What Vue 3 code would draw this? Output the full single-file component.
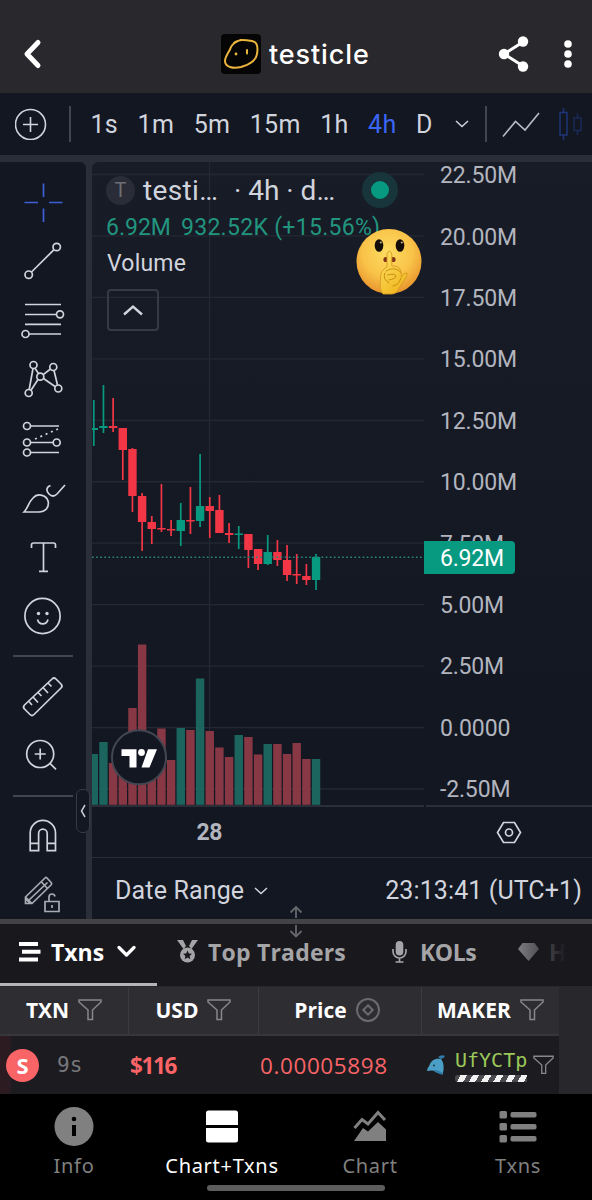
<script setup>
import { ref } from "vue"

const intervals = ["1s", "1m", "5m", "15m", "1h", "4h", "D"]
const activeInterval = ref("4h")

const priceLabels = ["22.50M", "20.00M", "17.50M", "15.00M", "12.50M", "10.00M", "7.50M", "5.00M", "2.50M", "0.0000", "-2.50M"]
const labelWidth = { 5: 64, 6: 77 }

// up, high, low, body top, body bottom, volume top
const rows = [
  [1, 400, 446, 428, 430, 754],
  [1, 385, 433, 426, 428, 742],
  [0, 398, 432, 426, 428, 763],
  [0, 428, 480, 428, 450, 760],
  [0, 448, 512, 449, 496, 708],
  [0, 493, 551, 496, 522, 644.5],
  [0, 516, 544, 522, 529, 755],
  [0, 484, 532, 528, 529, 728.5],
  [0, 520, 536, 529, 530, 760],
  [1, 503, 546, 520, 531, 728],
  [0, 487, 534, 520, 521, 730],
  [1, 454, 527, 506, 521, 678.5],
  [0, 497, 538, 506, 511, 731],
  [0, 495, 533, 510, 533, 747.5],
  [0, 523, 543, 533, 535, 757],
  [1, 526, 549, 533.5, 534.5, 735],
  [0, 534, 568, 534, 550, 737],
  [0, 549, 570, 549, 564, 754.5],
  [1, 535, 565, 552, 564, 744],
  [0, 540, 566, 552, 560, 744],
  [0, 545, 581, 560, 575, 754],
  [0, 554, 584, 574, 575, 743],
  [0, 564, 585, 576, 580, 759],
  [1, 554, 590, 557, 580, 759]
]
const candles = rows.map(([up, high, low, top, bottom, vol], i) => ({
  up, high, low, top, bottom, vol,
  x: 93.8 + i * 9.663
}))

const navItems = ["Info", "Chart+Txns", "Chart", "Txns"]
const activeNav = ref("Chart+Txns")
</script>

<template>
  <div class="app">
    <header class="header">
      <svg class="back" width="20" height="32" viewBox="0 0 20 32">
        <path d="M16 4.500 5 16 16 27.500" fill="none" stroke="#fff" stroke-width="5" stroke-linecap="round" stroke-linejoin="round" />
      </svg>
      <svg class="logo" width="40" height="40" viewBox="0 0 40 40">
        <rect width="40" height="40" rx="4" fill="#050505" />
        <path d="M13 9C17 5 24 6 31 7C37 8 37 14 36 20C35 27 27 31 20 33C12 35 4 33 4 27C4 22 9 17 10 13C11 10 16 7 20 6" fill="none" stroke="#eab53c" stroke-width="2" stroke-linecap="round" />
        <circle cx="15" cy="20" r="1.400" fill="#eab53c" />
        <path d="M26 16V19.500" stroke="#eab53c" stroke-width="2" stroke-linecap="round" />
      </svg>
      <h1 class="title">testicle</h1>
      <svg class="share" width="32" height="36" viewBox="0 0 32 36">
        <path d="M25 6 6 18 25 30" fill="none" stroke="#fff" stroke-width="3" />
        <circle cx="25" cy="5.500" r="5.200" fill="#fff" />
        <circle cx="6" cy="18" r="5.200" fill="#fff" />
        <circle cx="25" cy="30.500" r="5.200" fill="#fff" />
      </svg>
      <svg class="more" width="8" height="30" viewBox="0 0 8 30">
        <circle cx="4" cy="5" r="3.800" fill="#fff" />
        <circle cx="4" cy="15" r="3.800" fill="#fff" />
        <circle cx="4" cy="25" r="3.800" fill="#fff" />
      </svg>
    </header>

    <div class="toolbar">
      <svg width="32" height="32" viewBox="0 0 32 32" fill="none" stroke="#d1d4dc" stroke-width="1.600">
        <circle cx="15.500" cy="16.500" r="15" />
        <path d="M15.500 9V24M8 16.500H23" />
      </svg>
      <i class="divider first"></i>
      <button
        v-for="item in intervals"
        :key="item"
        class="interval"
        :class="{ active: item === activeInterval }"
        @click="activeInterval = item"
      >{{ item }}</button>
      <svg class="caret" width="14" height="8" viewBox="0 0 14 8">
        <path d="M1 1 7 6.500 13 1" fill="none" stroke="#d1d4dc" stroke-width="1.500" />
      </svg>
      <i class="divider"></i>
      <svg class="line-type" width="38" height="28" viewBox="0 0 38 28">
        <path d="M1 26.500 13.500 11.500 23 20 37 3" fill="none" stroke="#b9bcc5" stroke-width="1.600" />
      </svg>
      <svg class="candle-type" width="24" height="34" viewBox="0 0 24 34" fill="none" stroke="#1e3677" stroke-width="1.500">
        <path d="M1 5.500H8V28H1ZM4.500 1V5.500M4.500 28V33" />
        <path d="M15 11H22V23.500H15ZM18.500 6.500V11M18.500 23.500V28" stroke="#1a2b59" />
      </svg>
    </div>

    <div class="main">
      <aside class="tools">
        <svg class="tool" viewBox="0 0 86 59">
          <path class="blue" d="M43.500 10.500V24M43.500 35.500V49M24.500 29.500H38M49 29.500H62.500" />
        </svg>
        <svg class="tool" viewBox="0 0 86 59">
          <circle cx="56.700" cy="15" r="3.700" /><circle cx="28.700" cy="42.700" r="3.700" />
          <path d="M31.500 40 54 17.700" />
        </svg>
        <svg class="tool" viewBox="0 0 86 59">
          <circle cx="60" cy="23.300" r="3.500" /><circle cx="25.500" cy="43" r="3.500" />
          <path d="M25 13.500H61M25 23.500H56.500M25 33.300H61M29 43H61" />
        </svg>
        <svg class="tool" viewBox="0 0 86 59">
          <circle cx="33.500" cy="15" r="3.500" /><circle cx="53.300" cy="17" r="3.500" /><circle cx="40.300" cy="26.700" r="3.500" />
          <circle cx="28.700" cy="43" r="3.500" /><circle cx="58.300" cy="38.500" r="3.500" />
          <path d="M33 18.500 29.200 39.500M35 18.200 38.500 23.500M38 29.500 31 40.200M43.200 24.600 50.500 19M43.500 28.500 55 36.500M54 20.500 57.500 35" />
        </svg>
        <svg class="tool" viewBox="0 0 86 59">
          <circle cx="27" cy="17" r="3.500" /><circle cx="27" cy="33.500" r="3.500" /><circle cx="56.700" cy="33.500" r="3.500" /><circle cx="27" cy="43.500" r="3.500" />
          <path d="M30.500 17H59M30.500 33.500H53M30.500 43.500H59" />
          <path d="M35 30 58 20" stroke-dasharray="2 3.800" />
        </svg>
        <svg class="tool" viewBox="0 0 86 59">
          <path d="M24 44C28 40 28 35 33 30C38 24.500 47 27 48.300 34C49 40 45 44 39 44ZM50.500 17.500C46 19 46 23 49 26C52 29 54.500 28.500 57 26L65 17" />
        </svg>
        <svg class="tool" viewBox="0 0 86 59">
          <path d="M31.500 21V18Q31.500 16 33.500 16H53.500Q55.500 16 55.500 18V21M43.500 16V44M39 44.300H48" />
        </svg>
        <svg class="tool" viewBox="0 0 86 59">
          <circle cx="42.500" cy="30" r="17.600" />
          <path d="M37.500 33.500C39 39.300 46.500 39.300 48 33.500" />
          <circle class="solid" cx="38.500" cy="27.500" r="1.700" /><circle class="solid" cx="47" cy="27.500" r="1.700" />
        </svg>
        <i class="rule"></i>
        <svg class="tool" viewBox="0 0 86 59">
          <path d="M52 12Q54 10 56 12L61 17Q63 19 61 21L34 47.500Q32 49.500 30 47.500L24.500 42Q22.500 40 24.500 38ZM28.500 34 32 38M33 30 38 35.500M38 25.500 41.500 29M43 20.500 48 26M48 16 51.500 19.500" />
        </svg>
        <svg class="tool" viewBox="0 0 86 59">
          <circle cx="40.200" cy="28" r="13.500" />
          <path d="M40.200 22.500V33.500M34.700 28H45.700M49.700 37.200 56 43.300" />
        </svg>
        <i class="rule"></i>
        <svg class="tool" viewBox="0 0 86 59">
          <path d="M30.200 43.700V26A12.600 12.600 0 0 1 55.500 26V43.700H47.200V26.500A4.300 4.300 0 0 0 38.600 26.500V43.700ZM30.200 36.300H38.600M47.200 36.300H55.500" />
        </svg>
        <svg class="tool dim" viewBox="0 0 86 59">
          <path d="M25.500 31 45 12Q46 11 47 12L51.500 17Q52 18 51 19L32 37.500H25.500ZM41 15.500 47.500 22.500M29 34 47.500 16.500M25.500 31 32 37.500M26 33 29.500 37" />
          <path d="M45 35.500H59V45.500H45ZM49 35.500V31Q49 28 52 28Q54.500 28 55 30.500M52 39V42" />
        </svg>
      </aside>

      <button class="collapse">
        <svg width="6" height="14" viewBox="0 0 6 14"><path d="M5 1 1.500 7 5 13" fill="none" stroke="#c9ccd4" stroke-width="1.500" /></svg>
      </button>

      <section class="chart">
        <svg class="plot" width="500" height="696" viewBox="92 162 500 696">
          <g class="grid">
            <path v-for="(label, i) in priceLabels" :key="label" :d="`M92 ${174.5 + i * 61.45}H424`" />
            <path d="M209.500 162V806" />
          </g>
          <rect
            v-for="c in candles"
            :key="'v' + c.x"
            :x="c.x - 4.200"
            :y="c.vol"
            width="8.400"
            :height="804.800 - c.vol"
            :fill="c.up ? '#1c655f' : '#883844'"
          />
          <g v-for="c in candles" :key="c.x" :fill="c.up ? '#089981' : '#f23645'">
            <rect :x="c.x - 0.850" :y="c.high" width="1.700" :height="c.low - c.high" />
            <rect :x="c.x - 4.200" :y="c.top" width="8.400" :height="Math.max(c.bottom - c.top, 1.500)" />
          </g>
          <path d="M92 557.300H424" stroke="#27837b" stroke-width="1.500" stroke-dasharray="1.700 2.400" />
          <path class="axis" d="M92 806H424M426 806H592M92 858H592" />

          <text
            v-for="(label, i) in priceLabels"
            :key="'t' + label"
            class="price"
            x="440"
            :y="183.200 + i * 61.400"
            :textLength="i > 8 ? 70.500 : labelWidth[label.length]"
          >{{ label }}</text>
          <path d="M424 541H511Q515 541 515 545V570Q515 574 511 574H424Z" fill="#089981" />
          <text class="price now" x="440" y="566.200" textLength="64">6.92M</text>
          <text class="day" x="196.500" y="839.500" textLength="26">28</text>

          <g fill="none" stroke="#d1d4dc" stroke-width="1.700">
            <path d="M503.500 822.500H514.500L520.500 832.500 514.500 842.500H503.500L497.500 832.500Z" />
            <circle cx="509" cy="832.500" r="3.500" />
          </g>

          <circle cx="139" cy="757.300" r="27" fill="#131722" stroke="#434651" stroke-width="2" />
          <path d="M121.500 749.300H136.500V767.500H129.500V756H121.500ZM148 749.300H157L149.500 767.500H141.500Z" fill="#fff" />
          <circle cx="141.500" cy="752.500" r="3.400" fill="#fff" />
        </svg>

        <div class="legend">
          <div class="symbol">
            <span class="badge">T</span>
            <span class="name">testi…</span>
            <span class="meta">· 4h · d…</span>
            <span class="status"></span>
          </div>
          <div class="values"><span>6.92M</span><span class="change">932.52K (+15.56%)</span></div>
          <div class="volume">Volume</div>
          <button class="fold">
            <svg width="22" height="12" viewBox="0 0 22 12"><path d="M2 10.500 11 2.500 20 10.500" fill="none" stroke="#d1d4dc" stroke-width="2.400" /></svg>
          </button>
        </div>

        <svg class="emoji" width="68" height="68" viewBox="0 0 68 68">
          <defs>
            <radialGradient id="face" cx="48%" cy="36%" r="64%">
              <stop offset="0" stop-color="#fddc62" />
              <stop offset=".6" stop-color="#f9c348" />
              <stop offset="1" stop-color="#e8942d" />
            </radialGradient>
            <linearGradient id="hand" x1="0" y1="0" x2=".6" y2="1">
              <stop offset="0" stop-color="#ffe36a" />
              <stop offset="1" stop-color="#f0b820" />
            </linearGradient>
          </defs>
          <circle cx="34" cy="33.500" r="32.500" fill="url(#face)" />
          <ellipse cx="24" cy="17.500" rx="4.300" ry="6.300" fill="#120d08" />
          <ellipse cx="45" cy="17.500" rx="4.300" ry="6.300" fill="#120d08" />
          <circle cx="25.800" cy="14.500" r="1.100" fill="#c9b28a" /><circle cx="46.800" cy="14.500" r="1.100" fill="#c9b28a" />
          <ellipse cx="31" cy="31.500" rx="2.600" ry="2.600" fill="#7e2f1a" /><ellipse cx="38" cy="31.500" rx="2.600" ry="2.600" fill="#7e2f1a" />
          <path d="M32 39V26Q34.300 20 36.800 26V38Q45 37.500 46 44L46.500 49Q49 44 52 45Q53 47 50 51L44 60Q42 66 36 66H28Q24 61 25.500 52Q25 42 32 39Z" fill="url(#hand)" stroke="#d69a22" stroke-width=".9" />
          <path d="M31 43Q40 37.500 46 44.500M32.500 47Q40 45 41 48Q40.500 51 34 52M30 45Q27 51 34 55M46 50Q44 57 38 58" fill="none" stroke="#c98e14" stroke-width="1" stroke-linecap="round" />
        </svg>

        <footer class="chart-foot">
          <span class="range">Date Range</span>
          <svg width="14" height="8" viewBox="0 0 14 8"><path d="M1 1 7 6.500 13 1" fill="none" stroke="#d1d4dc" stroke-width="1.500" /></svg>
          <span class="clock">23:13:41 (UTC+1)</span>
        </footer>
      </section>
    </div>

    <div class="splitter">
      <svg class="resize" width="16" height="34" viewBox="0 0 16 34">
        <path d="M8 13V2M2.500 7.500 8 2 13.500 7.500M8 20V31.500M2.500 26 8 31.500 13.500 26" fill="none" stroke="#66676d" stroke-width="1.800" />
      </svg>
    </div>

    <nav class="tabs">
      <div class="tab active">
        <svg width="22" height="20" viewBox="0 0 22 20" fill="#fff"><path d="M0 0H19V4H0ZM3 7.800H21.500V11.800H3ZM0 15.600H19V19.600H0Z" /></svg>
        <span class="tab-txns">Txns</span>
        <svg class="tab-caret" width="19" height="13" viewBox="0 0 19 13"><path d="M2 2.500 9.500 10 17 2.500" fill="none" stroke="#fff" stroke-width="3.200" stroke-linecap="round" stroke-linejoin="round" /></svg>
      </div>
      <div class="tab medal">
        <svg width="21" height="23" viewBox="0 0 21 23">
          <path d="M0 0H6L9 6 6.500 9ZM21 0H15L12 6 14.500 9Z" fill="#a5a5a7" />
          <circle cx="10.500" cy="15" r="7.500" fill="#a5a5a7" />
          <path d="M10.500 10.500 11.800 13.500 15 13.800 12.600 16 13.300 19.200 10.500 17.500 7.700 19.200 8.400 16 6 13.800 9.200 13.500Z" fill="#19181d" />
        </svg>
        <span class="tab-top">Top Traders</span>
      </div>
      <div class="tab mic">
        <svg width="15" height="22" viewBox="0 0 15 22">
          <rect x="3.700" y="0" width="7.600" height="14.500" rx="3.800" fill="#a5a5a7" />
          <path d="M1 8V10.500A6.500 6.500 0 0 0 14 10.500V8M7.500 17V21M3.500 21H11.500" fill="none" stroke="#a5a5a7" stroke-width="1.700" />
        </svg>
        <span class="tab-kols">KOLs</span>
      </div>
      <div class="tab holders">
        <svg width="21" height="18" viewBox="0 0 21 18"><path d="M4.500 0H16.500L21 6 10.500 18 0 6Z" fill="#96969a" /></svg>
        <span>Ho</span>
      </div>
      <div class="fade"></div>
    </nav>

    <div class="table">
      <div class="row head">
        <div class="cell c1"><span>TXN</span><svg class="funnel" viewBox="0 0 24 22"><path d="M1 1H23V3L14.500 11V20.500H10V11L1 3Z" /></svg></div>
        <div class="cell c2"><span>USD</span><svg class="funnel" viewBox="0 0 24 22"><path d="M1 1H23V3L14.500 11V20.500H10V11L1 3Z" /></svg></div>
        <div class="cell c3"><span>Price</span><svg class="coin" width="24" height="24" viewBox="0 0 24 24" fill="none" stroke="#6c6c70" stroke-width="2"><circle cx="12" cy="12" r="11" /><path d="M12 7.300 16.700 12 12 16.700 7.300 12Z" /></svg></div>
        <div class="cell c4"><span>MAKER</span><svg class="funnel" viewBox="0 0 24 22"><path d="M1 1H23V3L14.500 11V20.500H10V11L1 3Z" /></svg></div>
      </div>
      <div class="row body">
        <div class="cell c1"><span class="side">S</span><span class="age">9s</span></div>
        <div class="cell c2"><span class="usd">$116</span></div>
        <div class="cell c3"><span class="value">0.00005898</span></div>
        <div class="cell c4">
          <svg class="dolphin" width="19" height="20" viewBox="0 0 19 20">
            <path d="M0 16C0 13 2 12 3 9C5 4 10 3 14 4Q18 9 16 18L15.500 19L9 16.500Q6 15 0 16Z" fill="#4b9fc6" />
            <path d="M11 2Q15 -1 18 1Q16.500 4 14 4ZM6 15.500Q10 14 16 18L15.500 20L9 17.500Z" fill="#2f7da8" />
            <circle cx="7" cy="10.500" r="1" fill="#153b50" />
          </svg>
          <div class="maker"><span>UfYCTp</span><i class="stripes"></i></div>
          <svg class="funnel small" viewBox="0 0 24 22"><path d="M1 1H23V3L14.500 11V20.500H10V11L1 3Z" /></svg>
        </div>
      </div>
    </div>

    <nav class="bottom">
      <button
        v-for="item in navItems"
        :key="item"
        class="nav-item"
        :class="{ active: item === activeNav }"
        @click="activeNav = item"
      >
        <svg width="40" height="40" viewBox="0 0 40 40" fill="currentColor">
          <template v-if="item === 'Info'">
            <circle cx="20" cy="20.500" r="19.500" />
            <circle cx="20" cy="13" r="2.300" fill="#000" />
            <path d="M18 19H22V30H18Z" fill="#000" />
          </template>
          <template v-else-if="item === 'Chart+Txns'">
            <path d="M6.500 4.500H33.500Q36 4.500 36 7V19H4V7Q4 4.500 6.500 4.500ZM4 22H36V34Q36 36.500 33.500 36.500H6.500Q4 36.500 4 34Z" />
          </template>
          <template v-else-if="item === 'Chart'">
            <path d="M4 35 13 22 18 25.500 28 16 36 23.500V35Z" />
            <path d="M4.500 22 12 13.500 18 18 28 6.500 35 14" fill="none" stroke="currentColor" stroke-width="3" />
          </template>
          <template v-else>
            <rect v-for="n in 3" :key="'a' + n" x="1.500" :y="n * 12 - 7" width="7.500" height="7.500" rx="1.500" />
            <rect v-for="n in 3" :key="'b' + n" x="12.500" :y="n * 12 - 6" width="26" height="5.500" rx="1.800" />
          </template>
        </svg>
        <span>{{ item }}</span>
      </button>
      <i class="home-bar"></i>
    </nav>
  </div>
</template>

<style>
body {
  margin: 0;
  background: #000;
}
</style>

<style scoped>
.app {
  width: 592px;
  height: 1200px;
  overflow: hidden;
  display: flex;
  flex-direction: column;
  background: #2a2e39;
  font-family: Roboto, "Liberation Sans", sans-serif;
  color: #d1d4dc;
}

.app * {
  box-sizing: border-box;
}

svg {
  display: block;
  flex: none;
}

button {
  padding: 0;
  border: none;
  background: none;
  font: inherit;
  color: inherit;
}

span {
  white-space: nowrap;
}

/* ヘッダー */
.header {
  height: 93px;
  padding: 15px 20px 0 22px;
  display: flex;
  align-items: center;
  background: #29282d;
}

.logo {
  margin-left: 179px;
}

.title {
  width: 102px;
  margin: 0 0 0 8px;
  font-family: Inter, sans-serif;
  font-size: 27px;
  font-weight: 500;
  letter-spacing: 0.9px;
  color: #fff;
}

.share {
  margin-left: 127px;
}

.more {
  margin-left: auto;
}

/* 時間足ツールバー */
.toolbar {
  height: 62px;
  padding-left: 15px;
  display: flex;
  align-items: center;
  background: #131722;
  overflow: hidden;
}

.divider {
  width: 1.5px;
  height: 36px;
  background: #434651;
}

.divider.first {
  margin: 0 20px 0 22px;
}

.interval {
  margin-right: 19.5px;
  font-size: 25px;
  letter-spacing: 0.3px;
}

.interval.active {
  color: #3b65f3;
}

.caret {
  margin: 0 16px 0 3px;
}

.line-type {
  margin-left: 15px;
}

.candle-type {
  margin-left: 19px;
}

/* チャート */
.main {
  position: relative;
  height: 757px;
  margin-top: 7px;
  display: flex;
  gap: 6px;
}

.tools {
  width: 86px;
  padding-top: 11px;
  border-radius: 0 6px 0 0;
  background: #131722;
  overflow: hidden;
}

.tool {
  width: 86px;
  height: 59px;
  fill: none;
  stroke: #d1d4dc;
  stroke-width: 1.7;
}

.tool .blue {
  stroke: #3d5fd8;
}

.tool .solid {
  fill: #d1d4dc;
  stroke: none;
}

.tool.dim {
  stroke: #a8abb4;
}

.rule {
  display: block;
  width: 60px;
  height: 2px;
  margin: 10px 0 10px 13px;
  background: #434651;
}

.collapse {
  position: absolute;
  left: 76px;
  top: 627px;
  width: 14px;
  height: 44px;
  border: 1.5px solid #363a45;
  border-radius: 6px;
  background: #131722;
  display: flex;
  align-items: center;
  justify-content: center;
}

.chart {
  position: relative;
  width: 500px;
  border-radius: 6px 0 0 0;
  background: linear-gradient(#181c27, #131722 560px);
  overflow: hidden;
}

.grid path {
  stroke: #242832;
  stroke-width: 1.3;
}

.axis {
  stroke: #2a2e39;
  stroke-width: 2;
}

.price {
  font-size: 23px;
  fill: #b2b5be;
}

.price.now {
  fill: #fff;
}

.day {
  font-size: 23px;
  font-weight: 700;
  fill: #b2b5be;
}

.legend {
  position: absolute;
  left: 14px;
  top: 10px;
}

.symbol {
  height: 36px;
  display: flex;
  align-items: center;
  font-size: 28px;
}

.badge {
  width: 29px;
  height: 29px;
  border-radius: 50%;
  background: #2a2c37;
  color: #6d6f78;
  font-size: 20px;
  line-height: 29px;
  text-align: center;
}

.name {
  width: 91px;
  margin-left: 8px;
  letter-spacing: 0.35px;
}

.meta {
  width: 128px;
}

.status {
  width: 36px;
  height: 36px;
  border: 9.5px solid #17353b;
  border-radius: 50%;
  background: #089981;
}

.values {
  height: 36px;
  line-height: 40px;
  font-size: 23px;
  color: #22957f;
}

.change {
  margin-left: 10px;
  letter-spacing: 0.3px;
}

.volume {
  height: 36px;
  padding-left: 1px;
  line-height: 40px;
  font-size: 23px;
  letter-spacing: 0.2px;
}

.fold {
  width: 52px;
  height: 42px;
  margin: 9px 0 0 1px;
  border: 2px solid #363a45;
  border-radius: 4px;
  display: flex;
  align-items: center;
  justify-content: center;
}

.emoji {
  position: absolute;
  left: 263px;
  top: 66px;
}

.chart-foot {
  height: 61px;
  padding: 4px 10px 0 23px;
  display: flex;
  align-items: center;
  background: #131722;
  font-size: 25px;
}

.range {
  width: 139px;
  letter-spacing: 0.15px;
}

.clock {
  margin-left: auto;
  letter-spacing: 0.1px;
}

.splitter {
  position: relative;
  z-index: 1;
  flex: none;
  height: 5px;
  background: #434347;
}

.resize {
  position: absolute;
  left: 288px;
  top: -14px;
}

/* タブ */
.tabs {
  position: relative;
  height: 62px;
  flex: none;
  display: flex;
  overflow: hidden;
  background: #19181d;
  color: #a5a5a7;
  font-family: "Open Sans", sans-serif;
  font-size: 23px;
  font-weight: 700;
}

.tab {
  flex: none;
  display: flex;
  align-items: center;
  padding-bottom: 7px;
}

.tab.active {
  width: 157px;
  padding: 0 0 4px 19px;
  border-bottom: 3px solid #b5b5b7;
  color: #fff;
}

.tab span {
  margin-left: 10px;
}

.tab .tab-txns {
  width: 54px;
}

.tab-caret {
  margin-left: 12px;
}

.medal {
  width: 215px;
  padding-left: 20px;
}

.tab .tab-top {
  letter-spacing: 0.2px;
}

.mic {
  width: 146px;
  padding-left: 20px;
}

.tab.mic span {
  margin-left: 13px;
  letter-spacing: -0.4px;
}

.fade {
  position: absolute;
  right: 0;
  top: 0;
  width: 86px;
  height: 62px;
  background: linear-gradient(90deg, transparent, #19181d 70%);
}

/* 取引テーブル */
.table {
  flex: none;
  height: 108px;
  padding-top: 1px;
  background: #28272c;
  font-family: "Open Sans", sans-serif;
}

.row {
  width: 559px;
  display: flex;
}

.cell {
  display: flex;
  align-items: center;
}

.c1 {
  width: 129px;
}

.c2 {
  width: 130px;
}

.c3 {
  width: 163px;
}

.c4 {
  width: 137px;
}

.head {
  height: 49px;
  background: #2e2d32;
  border-bottom: 2px solid #37363b;
  color: #fff;
  font-size: 21px;
  font-weight: 700;
}

.head .cell {
  justify-content: center;
  gap: 9px;
  padding-bottom: 2px;
  border-right: 1px solid #3c3b41;
}

.head .c3 {
  padding-right: 6px;
}

.head .c4 {
  border-right: none;
}

.funnel {
  width: 24px;
  height: 22px;
  fill: none;
  stroke: #88888c;
  stroke-width: 1.5;
}

.body {
  height: 58px;
  background: linear-gradient(90deg, #2d1b21 0, #2a1c22 10px, #1c1b20 12px);
}

.side {
  width: 33px;
  height: 33px;
  margin-left: 6px;
  border-radius: 50%;
  background: #f96467;
  color: #fff;
  font-size: 22px;
  font-weight: 700;
  line-height: 32px;
  text-align: center;
}

.age {
  margin-left: 18px;
  font-family: "DejaVu Sans Mono", monospace;
  font-size: 21px;
  color: #77777b;
}

.usd {
  margin-left: 1px;
  font-size: 22.5px;
  font-weight: 700;
  letter-spacing: -1.4px;
  color: #f96467;
}

.value {
  margin-left: 1px;
  font-size: 22.5px;
  letter-spacing: 0.6px;
  color: #f96467;
}

.dolphin {
  margin-left: 5px;
}

.maker {
  width: 72px;
  height: 36px;
  margin-left: 9px;
  font-family: "DejaVu Sans Mono", monospace;
  font-size: 20px;
  line-height: 26px;
  color: #9bc859;
}

.maker span {
  display: block;
  height: 28px;
}

.stripes {
  display: block;
  height: 7px;
  border-radius: 3px 0 0 3px;
  background: repeating-linear-gradient(120deg, #4a494e 0 5px, #f2f2f2 5px 10.5px);
}

.funnel.small {
  width: 21px;
  height: 20px;
  margin-left: 6px;
}

/* 下部ナビゲーション */
.bottom {
  position: relative;
  flex: none;
  height: 106px;
  display: flex;
  background: #000;
  font-family: "Noto Sans", sans-serif;
}

.nav-item {
  width: 148px;
  padding-top: 12px;
  display: flex;
  flex-direction: column;
  align-items: center;
  color: #808080;
  font-size: 20px;
  letter-spacing: 0.7px;
}

.nav-item span {
  margin-top: 7px;
  line-height: 26px;
}

.nav-item.active {
  color: #fff;
}

.home-bar {
  position: absolute;
  left: 207px;
  bottom: 9px;
  width: 178px;
  height: 6px;
  border-radius: 3px;
  background: #5d5d5d;
}
</style>
